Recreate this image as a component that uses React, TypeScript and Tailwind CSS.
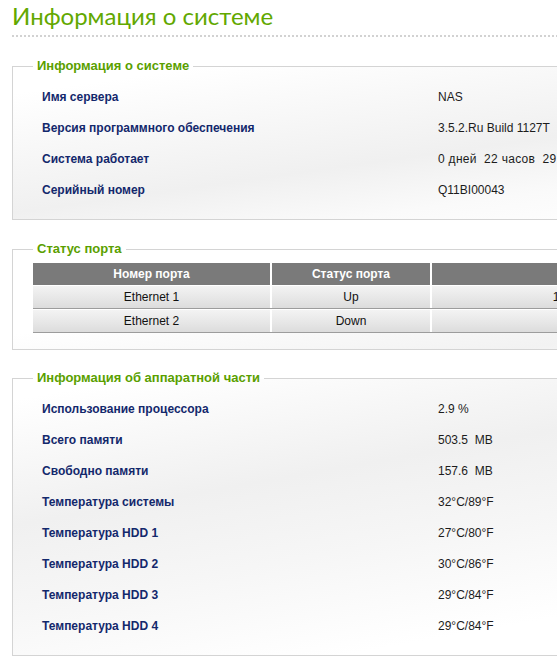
type Row = [string, string, string?];

const systemRows: Row[] = [
  ["Имя сервера", "NAS"],
  ["Версия программного обеспечения", "3.5.2.Ru Build 1127T"],
  ["Система работает", "0 дней  22 часов  29 минут", "tracking-[0.3px]"],
  ["Серийный номер", "Q11BI00043"],
];

const hardwareRows: Row[] = [
  ["Использование процессора", "2.9 %"],
  ["Всего памяти", "503.5  MB"],
  ["Свободно памяти", "157.6  MB"],
  ["Температура системы", "32°C/89°F"],
  ["Температура HDD 1", "27°C/80°F"],
  ["Температура HDD 2", "30°C/86°F"],
  ["Температура HDD 3", "29°C/84°F"],
  ["Температура HDD 4", "29°C/84°F"],
];

const ports: [string, string, string][] = [
  ["Ethernet 1", "Up", "1000 Mbps"],
  ["Ethernet 2", "Down", ""],
];

function InfoRows({ rows }: { rows: Row[] }) {
  return (
    <div className="flex flex-col">
      {rows.map(([label, value, extra]) => (
        <div key={label} className="grid h-[31px] grid-cols-[396px_1fr] items-center text-[12px] leading-[14px]">
          <span className="font-bold text-[#13286c]">{label}</span>
          <span className={extra ? "whitespace-pre text-[#1c1c1c] " + extra : "whitespace-pre text-[#1c1c1c]"}>{value}</span>
        </div>
      ))}
    </div>
  );
}

function Legend({ children, shift }: { children: React.ReactNode; shift?: boolean }) {
  return (
    <legend
      className={
        shift
          ? "-ml-[9px] px-[4px] text-[13px] font-bold leading-[16px] text-[#5a9f00]"
          : "px-[4px] text-[13px] font-bold leading-[16px] text-[#5a9f00]"
      }
    >
      {children}
    </legend>
  );
}

export default function App() {
  return (
    <div className="w-[557px] overflow-hidden bg-white font-['Liberation_Sans',Arial,sans-serif]">
      <div className="w-[820px] pl-[12px]">
        <h1 className="h-[34px] pt-[1px] font-['Lato',sans-serif] text-[24px] leading-[30px] text-[#62a800]">
          Информация о системе
        </h1>
        <div className="mt-[1px] h-[2px] bg-[linear-gradient(to_right,#d2d2d2_2px,transparent_2px)] bg-[length:4px_2px]" />

        <fieldset className="mt-[21px] border border-[#d4d4d4] bg-[linear-gradient(172deg,#ffffff_10%,#f0f0f0_55%,#fafafa_75%,#ffffff_95%)] pl-[29px] pt-[7px] pb-[14px]">
          <Legend shift>Информация о системе</Legend>
          <InfoRows rows={systemRows} />
        </fieldset>

        <fieldset className="mt-[21px] border border-[#d4d4d4] bg-[linear-gradient(172deg,#ffffff_40%,#f2f2f2_80%,#ffffff_100%)] pl-[20px] pt-[6px] pb-[16px]">
          <Legend>Статус порта</Legend>
          <div className="w-[700px] text-[12px] leading-[14px]">
            <div className="grid h-[22px] grid-cols-[239px_160px_1fr] bg-[#7a7a7a] font-bold text-white">
              <div className="flex items-center justify-center border-r-2 border-white">Номер порта</div>
              <div className="flex items-center justify-center border-r-2 border-white">Статус порта</div>
              <div />
            </div>
            {ports.map(([name, status, speed]) => (
              <div
                key={name}
                className="grid h-[24px] grid-cols-[239px_160px_1fr] border-t border-b border-t-white border-b-[#9c9c9c] bg-[linear-gradient(to_bottom,#f3f3f3,#e6e6e6_60%,#dcdcdc)] text-[#111]"
              >
                <div className="flex items-center justify-center border-r-2 border-white">{name}</div>
                <div className="flex items-center justify-center border-r-2 border-white">{status}</div>
                <div className="flex items-center justify-center">{speed}</div>
              </div>
            ))}
          </div>
        </fieldset>

        <fieldset className="mt-[20px] border border-[#d4d4d4] bg-[linear-gradient(170deg,#ffffff_5%,#f0f0f0_35%,#f6f6f6_55%,#ffffff_80%)] pl-[29px] pt-[7px] pb-[14px]">
          <Legend shift>Информация об аппаратной части</Legend>
          <InfoRows rows={hardwareRows} />
        </fieldset>
        <div className="h-[6px]" />
      </div>
    </div>
  );
}
